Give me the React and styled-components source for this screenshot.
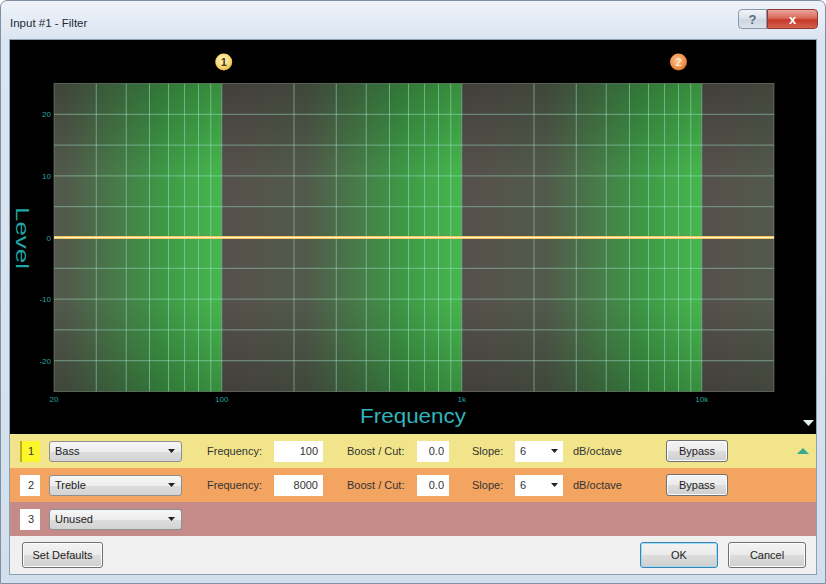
import React from 'react';
import styled, { createGlobalStyle } from 'styled-components';

const GlobalStyle = createGlobalStyle`
  html, body {
    margin: 0;
    padding: 0;
    background: #ffffff;
    font-family: "Liberation Sans", Arial, sans-serif;
  }
`;

const Window = styled.div`
  width: 826px;
  height: 584px;
  box-sizing: border-box;
  display: flex;
  flex-direction: column;
  padding: 0 9px 9px;
  border: 1px solid #7f8fa5;
  border-radius: 7px 7px 0 0;
  background: linear-gradient(180deg, #eef3f9 0px, #dbe5f1 38px, #d3dfec 100%);
`;

const TitleBar = styled.div`
  height: 39px;
  display: flex;
  align-items: flex-start;
  justify-content: space-between;
`;

const Title = styled.span`
  margin-top: 16px;
  font-size: 11.5px;
  color: #1e2a36;
`;

const Caption = styled.div`
  display: flex;
  margin-top: 8px;
  margin-right: -2px;
`;

const CaptionButton = styled.div`
  width: ${p => p.$w}px;
  height: 20px;
  box-sizing: border-box;
  display: flex;
  align-items: center;
  justify-content: center;
  border: 1px solid ${p => (p.$close ? '#8e3a32' : '#8a98aa')};
  border-radius: ${p => (p.$close ? '0 4px 4px 0' : '4px 0 0 4px')};
  background: ${p =>
    p.$close
      ? 'linear-gradient(180deg, #eaa59b 0%, #d86a5c 45%, #c7392a 55%, #d5604e 100%)'
      : 'linear-gradient(180deg, #f1f4f8 0%, #dde4ec 45%, #cdd6e1 55%, #dbe3ec 100%)'};
  color: ${p => (p.$close ? '#ffffff' : '#5f6b7a')};
  font-size: 13px;
  font-weight: bold;
`;

const Client = styled.div`
  flex: 1;
  display: flex;
  flex-direction: column;
  outline: 1px solid #8ea0b6;
`;

const GraphPanel = styled.div`
  height: 394px;
  background: #000000;
  display: flex;
`;

const Row = styled.div`
  height: 34px;
  display: flex;
  align-items: center;
  padding: 0 7px 0 10px;
  background: ${p => p.$bg};
  font-size: 11px;
  color: #333333;
`;

const IndexBox = styled.div`
  width: 20px;
  height: 21px;
  box-sizing: border-box;
  display: flex;
  align-items: center;
  justify-content: center;
  background: ${p => (p.$active ? '#fbf52a' : '#ffffff')};
  border-left: 2px solid ${p => (p.$active ? '#b8b020' : '#ffffff')};
  margin-right: 9px;
`;

const Dropdown = styled.div`
  width: ${p => p.$w}px;
  height: 21px;
  box-sizing: border-box;
  display: flex;
  align-items: center;
  justify-content: space-between;
  padding: 0 6px 0 5px;
  border: 1px solid #8d8f92;
  border-radius: 3px;
  background: linear-gradient(180deg, #f7f7f7 0%, #ececec 50%, #dcdcdc 51%, #d4d4d4 100%);
  color: #222222;
`;

const Label = styled.span`
  width: ${p => p.$w}px;
  padding-left: ${p => p.$pad}px;
  box-sizing: border-box;
  white-space: nowrap;
`;

const Field = styled.div`
  width: ${p => p.$w}px;
  height: 21px;
  box-sizing: border-box;
  display: flex;
  align-items: center;
  justify-content: ${p => (p.$left ? 'space-between' : 'flex-end')};
  padding: 0 5px;
  background: #ffffff;
  color: #333333;
`;

const Button = styled.button`
  width: ${p => p.$w}px;
  height: ${p => p.$h || 22}px;
  padding: 0;
  border: 1px solid ${p => (p.$focus ? '#3b86b4' : '#707070')};
  border-radius: 3px;
  background: linear-gradient(180deg, #f3f3f3 0%, #ebebeb 48%, #dddddd 50%, #cfcfcf 100%);
  box-shadow: ${p => (p.$focus ? 'inset 0 0 0 1px #9fdaf3' : 'inset 0 0 0 1px #fbfbfb')};
  font-family: "Liberation Sans", Arial, sans-serif;
  font-size: 11px;
  color: #1e1e1e;
`;

const Spacer = styled.div`
  flex: 1;
`;

const Footer = styled.div`
  flex: 1;
  display: flex;
  align-items: center;
  padding: 0 10px 0 12px;
  gap: 10px;
  background: #f0f0f0;
`;

const Arrow = () => (
  <svg width="7" height="4" viewBox="0 0 7 4">
    <path d="M0 0h7L3.5 4z" fill="#222" />
  </svg>
);

const xOf = f => 44 + 240 * Math.log10(f / 20);
const yOf = db => 197.5 - db * 6.16;
const TOP = yOf(25);
const BOTTOM = yOf(-25);
const LEFT = xOf(20);
const RIGHT = xOf(20000);

const bands = [
  [20, 100, 10],
  [100, 1000, 100],
  [1000, 10000, 1000],
  [10000, 20000, 10000],
];

const vLines = [];
[10, 100, 1000, 10000].forEach(d => {
  for (let m = 1; m <= 9; m++) {
    const f = d * m;
    if (f > 20 && f < 20000) vLines.push(f);
  }
});

const hLines = [20, 15, 10, 5, -5, -10, -15, -20];

function FilterGraph() {
  return (
    <svg width="806" height="394" viewBox="0 0 806 394">
      <defs>
        {bands.map(([a, b, d], i) => (
          <linearGradient key={i} id={`band${i}`} gradientUnits="userSpaceOnUse" x1={xOf(d)} x2={xOf(d * 10)} y1="0" y2="0">
            <stop offset="0" stopColor="#56504b" />
            <stop offset="0.35" stopColor="#525a4b" />
            <stop offset="0.75" stopColor="#3e9846" />
            <stop offset="1" stopColor="#47b74e" />
          </linearGradient>
        ))}
        <linearGradient id="vignette" x1="0" x2="0" y1="0" y2="1">
          <stop offset="0" stopColor="#000" stopOpacity="0.22" />
          <stop offset="0.3" stopColor="#000" stopOpacity="0" />
          <stop offset="0.7" stopColor="#000" stopOpacity="0" />
          <stop offset="1" stopColor="#000" stopOpacity="0.22" />
        </linearGradient>
        <radialGradient id="mark1" cx="0.45" cy="0.4" r="0.6">
          <stop offset="0" stopColor="#fff6c8" />
          <stop offset="0.7" stopColor="#f6d873" />
          <stop offset="1" stopColor="#e2b040" />
        </radialGradient>
        <radialGradient id="mark2" cx="0.45" cy="0.4" r="0.6">
          <stop offset="0" stopColor="#fbc48e" />
          <stop offset="0.7" stopColor="#f0934a" />
          <stop offset="1" stopColor="#d9732c" />
        </radialGradient>
      </defs>

      {bands.map(([a, b], i) => (
        <rect key={i} x={xOf(a)} y={TOP} width={xOf(b) - xOf(a)} height={BOTTOM - TOP} fill={`url(#band${i})`} />
      ))}
      <rect x={LEFT} y={TOP} width={RIGHT - LEFT} height={BOTTOM - TOP} fill="url(#vignette)" />

      {vLines.map(f => (
        <line key={f} x1={xOf(f)} x2={xOf(f)} y1={TOP} y2={BOTTOM} stroke="#a6e6d6" strokeOpacity="0.5" strokeWidth="1" />
      ))}
      {hLines.map(db => (
        <line key={db} x1={LEFT} x2={RIGHT} y1={yOf(db)} y2={yOf(db)} stroke="#a6e6d6" strokeOpacity="0.5" strokeWidth="1" />
      ))}
      <rect x={LEFT} y={TOP} width={RIGHT - LEFT} height={BOTTOM - TOP} fill="none" stroke="#8c9a8c" strokeOpacity="0.5" />

      <line x1={LEFT} x2={RIGHT} y1={yOf(0)} y2={yOf(0)} stroke="#f2c86a" strokeWidth="3" />
      <line x1={LEFT} x2={RIGHT} y1={yOf(0)} y2={yOf(0)} stroke="#fff1b8" strokeWidth="1" />

      {[20, 10, 0, -10, -20].map(db => (
        <text key={db} x="41" y={yOf(db) + 3} fontSize="8" fill="#2aa3a0" textAnchor="end" fontFamily="Liberation Sans, Arial, sans-serif">
          {db}
        </text>
      ))}
      {[
        [20, '20'],
        [100, '100'],
        [1000, '1k'],
        [10000, '10k'],
      ].map(([f, t]) => (
        <text key={t} x={xOf(f)} y="362" fontSize="8" fill="#2aa3a0" textAnchor="middle" fontFamily="Liberation Sans, Arial, sans-serif">
          {t}
        </text>
      ))}

      <text
        x="12"
        y="198"
        transform="rotate(90 12 198)"
        fontSize="19"
        fill="#1fa6a6"
        textAnchor="middle"
        dominantBaseline="central"
        textLength="62"
        lengthAdjust="spacingAndGlyphs"
        fontFamily="Liberation Sans, Arial, sans-serif"
      >
        Level
      </text>
      <text
        x="403"
        y="383"
        fontSize="20"
        fill="#30b3bc"
        textAnchor="middle"
        textLength="106"
        lengthAdjust="spacingAndGlyphs"
        fontFamily="Liberation Sans, Arial, sans-serif"
      >
        Frequency
      </text>

      <circle cx={xOf(100) + 2} cy="22" r="8.5" fill="url(#mark1)" />
      <text x={xOf(100) + 2} y="26" fontSize="11" fontWeight="bold" fill="#4a3b12" textAnchor="middle" fontFamily="Liberation Sans, Arial, sans-serif">
        1
      </text>
      <circle cx={xOf(8000)} cy="22" r="8.5" fill="url(#mark2)" />
      <text x={xOf(8000)} y="26" fontSize="11" fontWeight="bold" fill="#fde6cf" textAnchor="middle" fontFamily="Liberation Sans, Arial, sans-serif">
        2
      </text>

      <path d="M793 380h11l-5.5 6z" fill="#e4f0f0" />
    </svg>
  );
}

const filters = [
  { n: 1, type: 'Bass', freq: '100', bg: '#f2e48b', active: true },
  { n: 2, type: 'Treble', freq: '8000', bg: '#f4a461' },
  { n: 3, type: 'Unused', bg: '#c58b89' },
];

function FilterRow({ n, type, freq, bg, active }) {
  return (
    <Row $bg={bg}>
      <IndexBox $active={active}>{n}</IndexBox>
      <Dropdown $w={133}>
        <span>{type}</span>
        <Arrow />
      </Dropdown>
      {freq && (
        <>
          <Label $w={92} $pad={25}>Frequency:</Label>
          <Field $w={49}>{freq}</Field>
          <Label $w={94} $pad={24}>Boost / Cut:</Label>
          <Field $w={32}>0.0</Field>
          <Label $w={66} $pad={23}>Slope:</Label>
          <Field $w={48} $left>
            <span>6</span>
            <Arrow />
          </Field>
          <Label $w={103} $pad={10}>dB/octave</Label>
          <Button $w={62}>Bypass</Button>
        </>
      )}
      <Spacer />
      {active && (
        <svg width="12" height="6" viewBox="0 0 12 6">
          <path d="M0 6h12L6 0z" fill="#38a98c" />
        </svg>
      )}
    </Row>
  );
}

export default function App() {
  return (
    <>
      <GlobalStyle />
      <Window>
        <TitleBar>
          <Title>Input #1 - Filter</Title>
          <Caption>
            <CaptionButton $w={29}>?</CaptionButton>
            <CaptionButton $w={51} $close>
              x
            </CaptionButton>
          </Caption>
        </TitleBar>
        <Client>
          <GraphPanel>
            <FilterGraph />
          </GraphPanel>
          {filters.map(f => (
            <FilterRow key={f.n} {...f} />
          ))}
          <Footer>
            <Button $w={81} $h={26}>Set Defaults</Button>
            <Spacer />
            <Button $w={78} $h={26} $focus>
              OK
            </Button>
            <Button $w={78} $h={26}>Cancel</Button>
          </Footer>
        </Client>
      </Window>
    </>
  );
}
